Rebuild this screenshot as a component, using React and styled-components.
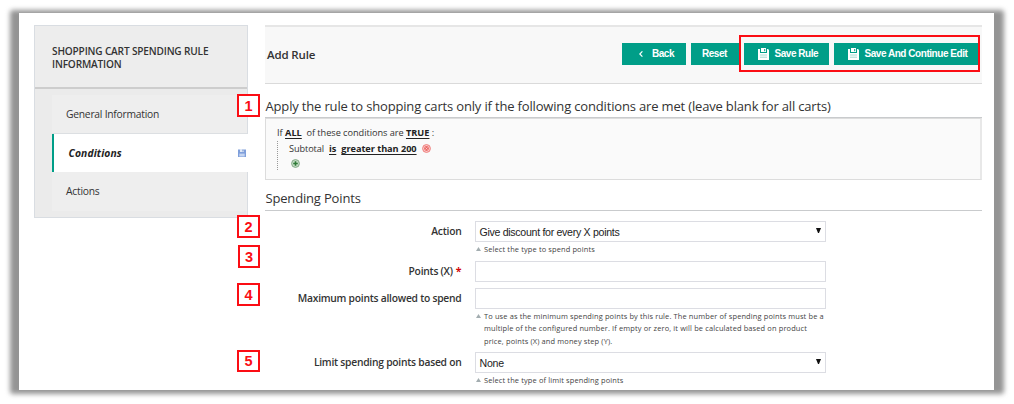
import React from "react";
import styled, { createGlobalStyle } from "styled-components";

const Global = createGlobalStyle`
  *, *::before, *::after { box-sizing: border-box; }
  body { margin: 0; background: #fff; font-family: "Open Sans", "Noto Sans", sans-serif; color: #333; }
`;

const Stage = styled.div`
  width: 1014px;
  height: 404px;
  padding: 13px 20px 14px 19px;
  overflow: hidden;
`;

const Panel = styled.div`
  position: relative;
  z-index: 0;
  display: flex;
  gap: 17px;
  width: 975px;
  height: 377px;
  padding: 12px 12px 0 15px;
  &::before {
    content: "";
    position: absolute;
    z-index: -2;
    inset: -3px -10px -4px -9px;
    background: #949494;
    border-radius: 3px;
    filter: blur(2.8px);
  }
  &::after {
    content: "";
    position: absolute;
    z-index: -1;
    inset: 0;
    background: #fff;
  }
`;

const Text = styled.span`
  white-space: nowrap;
  font-size: ${(p) => p.$size || 10.5}px;
  font-weight: ${(p) => p.$weight || 400};
  font-style: ${(p) => (p.$italic ? "italic" : "normal")};
  letter-spacing: ${(p) => p.$track || 0}px;
  color: ${(p) => p.$color || "#333"};
`;

const Sidebar = styled.aside`
  width: 214px;
  height: 193px;
  border: 1px solid #d9dde2;
  background: #ebebeb;
`;

const SidebarTitle = styled.h3`
  display: flex;
  flex-direction: column;
  margin: 0;
  height: 63px;
  padding: 19px 0 0 17px;
  line-height: 13px;
  border-bottom: 2px solid #cdcdcd;
  background: #ededed;
`;

const TabList = styled.nav`
  padding: 6px 0 0 17px;
`;

const Tab = styled.a`
  display: flex;
  align-items: center;
  justify-content: space-between;
  height: ${(p) => (p.$active ? 38 : 39)}px;
  width: ${(p) => (p.$active ? 197 : 195)}px;
  padding: 0 3px ${(p) => p.$drop || 0}px ${(p) => (p.$active ? 14.5 : 13)}px;
  border-left: ${(p) => (p.$active ? "2px solid #009e88" : "1px solid #eee")};
  background: ${(p) => (p.$active ? "#fff" : "#eee")};
  border-bottom: ${(p) => (p.$line ? "1px solid #dcdfe2" : "0")};
`;

const Main = styled.main`
  width: 717px;
`;

const Header = styled.header`
  display: flex;
  align-items: center;
  justify-content: space-between;
  height: 59px;
  padding: 0 4px 2px 2px;
  border-top: 2px solid #e6e6e6;
  border-bottom: 1px solid #dadada;
  background: #f8f8f8;
`;

const Buttons = styled.div`
  display: flex;
  gap: 5px;
  margin-top: -1px;
`;

const Button = styled.button`
  display: flex;
  align-items: center;
  width: ${(p) => p.$w}px;
  height: 22px;
  padding: 0 0 0 ${(p) => p.$pad}px;
  gap: ${(p) => p.$gap || 5.5}px;
  border: 0;
  background: #009e88;
  color: #fff;
  font: bold 10px "Liberation Sans", Arial, sans-serif;
  letter-spacing: -0.46px;
  white-space: nowrap;
  svg { flex: none; }
`;

const SectionTitle = styled.h2`
  display: flex;
  align-items: center;
  margin: ${(p) => p.$top}px 0 0;
  height: ${(p) => p.$h}px;
  padding: 0 0 1px 0.5px;
  border-bottom: 1px solid #c9cbcd;
`;

const Conditions = styled.div`
  height: 62px;
  padding: 6px 0 0 11px;
  border: 1px solid #dcdcdc;
  border-right: 2px solid #e8e8e8;
  border-top-color: #ddd;
  background: #fafafa;
`;

const Line = styled.div`
  display: flex;
  align-items: center;
  height: 15.5px;
  gap: ${(p) => p.$gap || 0}px;
`;

const Nested = styled.div`
  padding-left: 11px;
  height: 29px;
  border-left: 1px dotted #999;
`;

const Param = styled(Text)`
  font-weight: 700;
  color: #222;
  text-decoration: underline;
  text-underline-offset: 1.5px;
`;

const Field = styled.div`
  display: flex;
  gap: 13.5px;
  margin-top: ${(p) => p.$top}px;
`;

const Label = styled.label`
  width: 196.5px;
  height: 20px;
  display: flex;
  align-items: center;
  justify-content: flex-end;
  gap: 3px;
`;

const Control = styled.div`
  width: 351px;
`;

const Input = styled.div`
  display: flex;
  align-items: center;
  justify-content: space-between;
  height: 21px;
  padding: 0 4px 0 3.5px;
  border: 1px solid #dcdde3;
  background: #fff;
  font: 10.6px "Liberation Sans", Arial, sans-serif;
  letter-spacing: ${(p) => p.$track || 0}px;
  color: #222;
  svg { margin-bottom: 2px; }
`;

const Note = styled.div`
  display: flex;
  gap: 3px;
  padding: 1px 0 0 1px;
  line-height: 12.6px;
  svg { margin-top: 4px; flex: none; }
`;

const NoteLines = styled.div`
  display: flex;
  flex-direction: column;
`;

const Badge = styled.div`
  position: absolute;
  left: ${(p) => p.$x}px;
  top: ${(p) => p.$y}px;
  display: flex;
  align-items: center;
  justify-content: center;
  width: ${(p) => p.$w || 23}px;
  height: ${(p) => p.$h || 23}px;
  border: 2px solid #fb0d14;
  background: #fff;
  color: #fb0d14;
  font: bold 14.5px "Liberation Sans", Arial, sans-serif;
`;

const Highlight = styled.div`
  position: absolute;
  left: 720px;
  top: 22px;
  width: 241px;
  height: 37px;
  border: 2px solid #fb0d14;
`;

const SaveIcon = () => (
  <svg width="11" height="12" viewBox="0 0 11 12">
    <path d="M0 1h2v4h7V1h1l1 1v10H0z" fill="#fff" />
    <path d="M3 0h5v4H3z" fill="#fff" />
    <path d="M6.2 1h1v2.2h-1z" fill="#009e88" />
    <path d="M2 7h7M2 9.2h7" stroke="#8fd0c6" strokeWidth=".8" />
  </svg>
);

const TabSaveIcon = () => (
  <svg width="8" height="8" viewBox="0 0 8 8">
    <path d="M0 0.5h8v7.5H0z" fill="#7f9fdb" />
    <path d="M2 0h4v3H2z" fill="#dfe8f7" />
    <path d="M4.5 .5h1v2h-1z" fill="#6685c5" />
    <path d="M1.3 4.6h5.4v2.9H1.3z" fill="#c5d5f1" />
  </svg>
);

const RemoveIcon = () => (
  <svg width="9" height="9" viewBox="0 0 9 9">
    <circle cx="4.5" cy="4.5" r="3.9" fill="#fbd0cf" stroke="#ee7d7b" />
    <circle cx="4.5" cy="4.5" r="2.4" fill="#ec6a68" />
    <path d="M3.5 3.5l2 2M5.5 3.5l-2 2" stroke="#fbdcdb" strokeWidth=".7" />
  </svg>
);

const AddIcon = () => (
  <svg width="9" height="9" viewBox="0 0 9 9">
    <circle cx="4.5" cy="4.5" r="3.9" fill="#c5dcc6" stroke="#83a886" />
    <path d="M4.5 2.2v4.6M2.2 4.5h4.6" stroke="#2f7a37" strokeWidth="1.6" />
  </svg>
);

const NoteArrow = () => (
  <svg width="5" height="4" viewBox="0 0 5 4">
    <path d="M2.5 0L5 4H0z" fill="#a3adb0" />
  </svg>
);

const SelectArrow = () => (
  <svg width="5" height="5" viewBox="0 0 5 5">
    <path d="M0 0h5L3 5H2z" fill="#111" />
  </svg>
);

const BackArrow = () => (
  <svg width="4" height="6" viewBox="0 0 4 6">
    <path d="M3.4 .4L.8 3l2.6 2.6" fill="none" stroke="#fff" strokeWidth="1.2" />
  </svg>
);

const NoteText = ({ lines }) => (
  <Note>
    <NoteArrow />
    <NoteLines>
      {lines.map((t) => (
        <Text key={t} $size={7.45} $track={0.13} $color="#444">{t}</Text>
      ))}
    </NoteLines>
  </Note>
);

const FieldLabel = ({ children }) => (
  <Text $size={10.3} $weight={600} $track={-0.25}>{children}</Text>
);

export default function App() {
  return (
    <Stage>
      <Global />
      <Panel>
        <Sidebar>
          <SidebarTitle>
            <Text $size={10.1} $weight={600} $track={-0.17}>SHOPPING CART SPENDING RULE</Text>
            <Text $size={10.1} $weight={600} $track={-0.17}>INFORMATION</Text>
          </SidebarTitle>
          <TabList>
            <Tab $line><Text $size={10.3} $track={-0.24}>General Information</Text></Tab>
            <Tab $active $drop={1}>
              <Text $size={10.3} $weight={700} $italic $track={0.12} $color="#222">Conditions</Text>
              <TabSaveIcon />
            </Tab>
            <Tab $drop={2}><Text $size={10.3} $track={-0.24}>Actions</Text></Tab>
          </TabList>
        </Sidebar>
        <Main>
          <Header>
            <Text $size={11.5} $weight={600} $track={-0.15}>Add Rule</Text>
            <Buttons>
              <Button $w={64} $pad={17} $gap={9}><BackArrow />Back</Button>
              <Button $w={48} $pad={11}>Reset</Button>
              <Button $w={85} $pad={14}><SaveIcon />Save Rule</Button>
              <Button $w={144} $pad={14}><SaveIcon />Save And Continue Edit</Button>
            </Buttons>
          </Header>
          <SectionTitle $top={11} $h={23}>
            <Text $size={13} $track={-0.165}>Apply the rule to shopping carts only if the following conditions are met (leave blank for all carts)</Text>
          </SectionTitle>
          <Conditions>
            <Line>
              <Text $size={9.2}>If&nbsp;</Text>
              <Param $size={9.2}>ALL</Param>
              <Text $size={9.2} $track={-0.04}>&nbsp; of these conditions are&nbsp;</Text>
              <Param $size={9.2}>TRUE</Param>
              <Text $size={9.2}>&nbsp;:</Text>
            </Line>
            <Nested>
              <Line $gap={5}>
                <Text $size={9.2} $track={-0.1}>Subtotal</Text>
                <Param $size={9.2} $track={-0.05}>is</Param>
                <Param $size={9.2} $track={-0.05}>greater than 200</Param>
                <RemoveIcon />
              </Line>
              <Line>
                <Text $size={9.2}>&nbsp;</Text>
                <AddIcon />
              </Line>
            </Nested>
          </Conditions>
          <SectionTitle $top={7} $h={24}>
            <Text $size={13} $track={-0.17}>Spending Points</Text>
          </SectionTitle>
          <Field $top={10}>
            <Label><FieldLabel>Action</FieldLabel></Label>
            <Control>
              <Input $track={-0.3}>Give discount for every X points<SelectArrow /></Input>
              <NoteText lines={["Select the type to spend points"]} />
            </Control>
          </Field>
          <Field $top={5}>
            <Label>
              <FieldLabel>Points (X)</FieldLabel>
              <Text $size={10.5} $weight={700} $color="#d40707">*</Text>
            </Label>
            <Control><Input /></Control>
          </Field>
          <Field $top={6}>
            <Label><FieldLabel>Maximum points allowed to spend</FieldLabel></Label>
            <Control>
              <Input />
              <NoteText
                lines={[
                  "To use as the minimum spending points by this rule. The number of spending points must be a",
                  "multiple of the configured number. If empty or zero, it will be calculated based on product",
                  "price, points (X) and money step (Y).",
                ]}
              />
            </Control>
          </Field>
          <Field $top={5}>
            <Label><FieldLabel>Limit spending points based on</FieldLabel></Label>
            <Control>
              <Input $track={-0.25}>None<SelectArrow /></Input>
              <NoteText lines={["Select the type of limit spending points"]} />
            </Control>
          </Field>
        </Main>
        <Highlight />
        <Badge $x={218} $y={81}>1</Badge>
        <Badge $x={218} $y={202}>2</Badge>
        <Badge $x={219} $y={232} $w={22}>3</Badge>
        <Badge $x={218} $y={270}>4</Badge>
        <Badge $x={218} $y={337} $h={22}>5</Badge>
      </Panel>
    </Stage>
  );
}
